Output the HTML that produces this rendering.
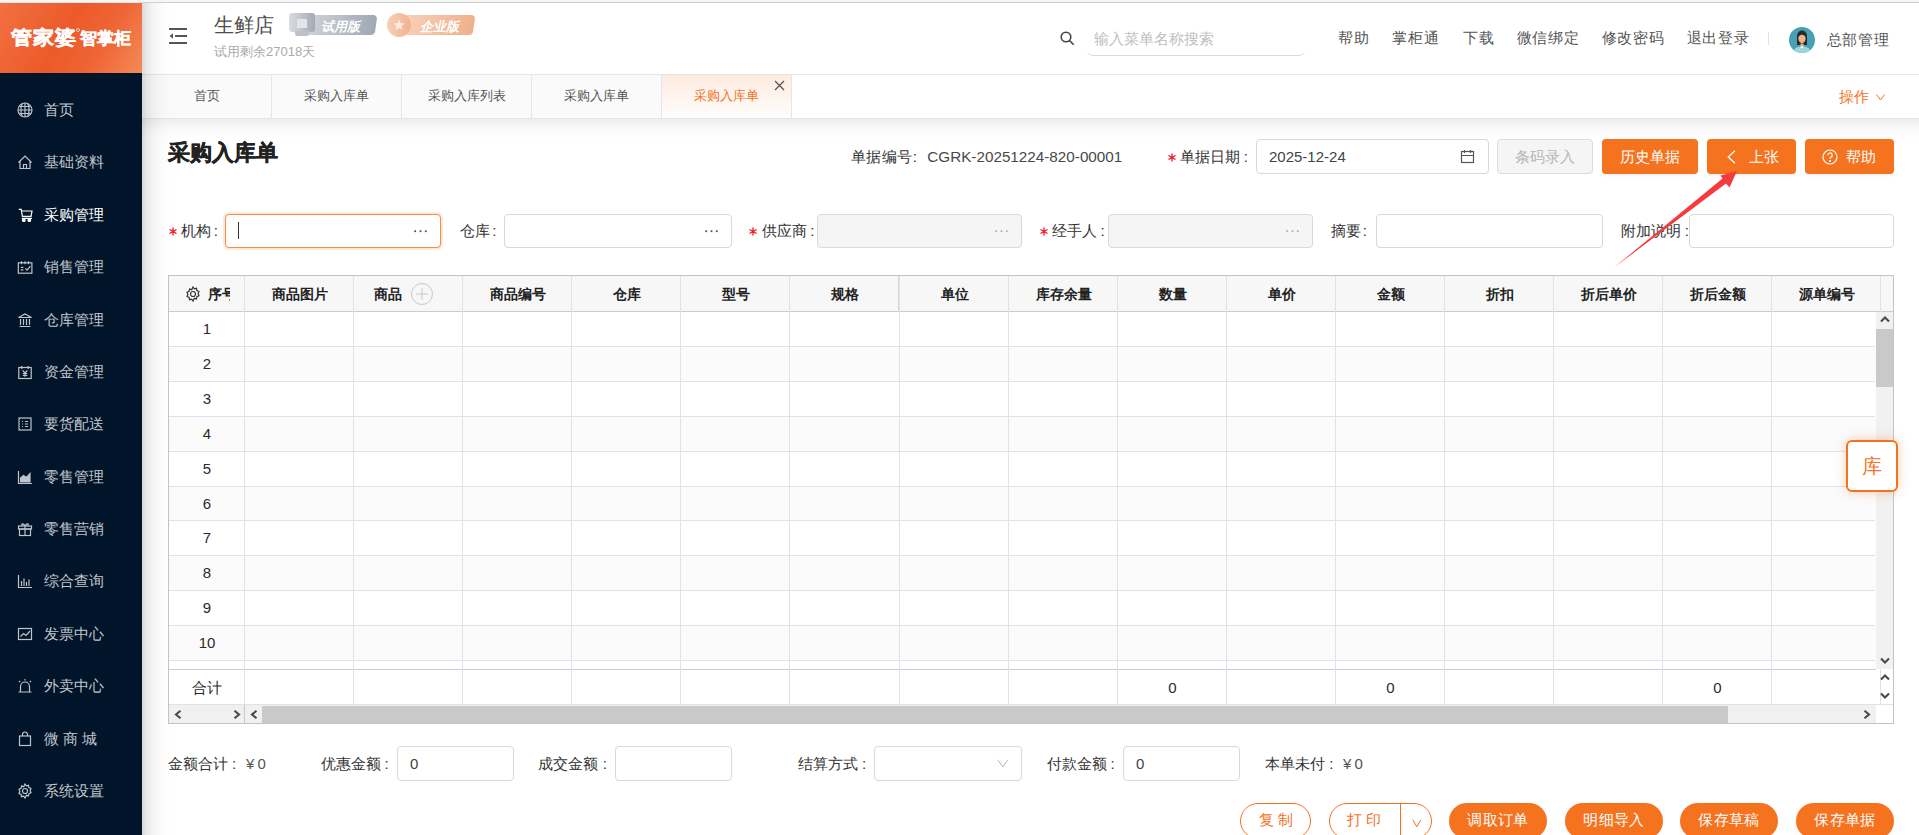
<!DOCTYPE html>
<html><head><meta charset="utf-8">
<style>
*{margin:0;padding:0;box-sizing:border-box}
html,body{width:1919px;height:835px;overflow:hidden;background:#fff;font-family:"Liberation Sans",sans-serif;color:#333}
.a{position:absolute}
.t{position:absolute;white-space:nowrap;line-height:1}
/* top strip */
#strip{left:0;top:0;width:1919px;height:2px;background:#f5f6f8}
#stripline{left:142px;top:2px;width:1777px;height:1px;background:#cfcfcf}
#stripline2{left:0;top:2px;width:142px;height:1px;background:#dfe6e9}
/* sidebar */
#side{left:0;top:3px;width:142px;height:832px;background:#001529}
#logo{left:0;top:3px;width:142px;height:70px;background:linear-gradient(120deg,#f27040 0%,#ec5a2a 45%,#ef6535 70%,#f58a58 100%)}
.mi{position:absolute;left:0;width:142px;height:20px}
.mi svg{position:absolute;left:17px;top:2px}
.mi span{position:absolute;left:44px;top:0;font-size:15px;line-height:20px;color:#c0c4cc;white-space:nowrap}
.mi.on span{color:#fff}
/* header */
#hdr{left:142px;top:3px;width:1777px;height:71px;background:#fff}
#shadowL{left:142px;top:3px;width:30px;height:832px;background:linear-gradient(90deg,rgba(0,0,0,.15) 0,rgba(0,0,0,.09) 15%,rgba(0,0,0,.045) 35%,rgba(0,0,0,.015) 65%,rgba(0,0,0,0) 100%)}
/* tabs */
#tabs{left:142px;top:74px;width:1777px;height:45px;background:#fff;border-top:1px solid #e6e6e6;border-bottom:1px solid #e6e6e6}
.tab{position:absolute;top:0;height:43px;width:130px;background:#fafafa;border-right:1px solid #e6e6e6;font-size:13px;color:#555;text-align:center;line-height:41px}
#tabshadow{left:142px;top:119px;width:1777px;height:20px;background:linear-gradient(180deg,rgba(0,0,0,.07) 0,rgba(0,0,0,.035) 30%,rgba(0,0,0,.01) 70%,rgba(0,0,0,0) 100%)}
/* form */
.lbl{position:absolute;font-size:15px;color:#333;white-space:nowrap;line-height:20px}
.req{color:#f5222d;margin-right:4px}
.req2{font-size:12px;color:#f5222d}
.inp{position:absolute;height:34px;border:1px solid #d9d9d9;border-radius:4px;background:#fff}
.inp.dis{background:#f5f5f5}
.dots{position:absolute;right:12px;top:8px;font-size:14px;color:#888;letter-spacing:1px;line-height:14px}
.btn{position:absolute;top:139px;height:35px;border-radius:4px;background:#f5721f;color:#fff;font-size:15px;text-align:center;line-height:35px;box-shadow:0 2px 2px rgba(80,100,140,.08)}
/* table */
#tbl{left:168px;top:275px;width:1726px;height:449px;border:1px solid #bfc3cc;background:#fff}
.vl{position:absolute;top:0;width:1px;background:#dfe2ea}
.hl{position:absolute;left:0;height:1px;background:#dfe2ea}
.th{position:absolute;top:0;height:36px;line-height:37px;text-align:center;font-size:14px;font-weight:bold;color:#222}
.rn{position:absolute;left:0;width:76px;text-align:center;font-size:15px;color:#2a2a2a;line-height:33px;height:35px}
/* bottom */
.pill{position:absolute;top:803px;height:36px;border-radius:18px;font-size:15px;text-align:center;line-height:34px}
.pill.o{border:1.3px solid #f5721f;color:#f5721f;background:#fff;line-height:32px}
.pill.f{background:#f5721f;color:#fff;line-height:34px;letter-spacing:0.3px}
</style></head><body>
<div class="a" id="strip"></div>
<div class="a" id="stripline"></div>
<div class="a" id="stripline2"></div>

<!-- SIDEBAR -->
<div class="a" id="side"></div>
<div class="a" id="logo"></div>
<div class="t" style="left:11px;top:25.8px;font-size:21px;font-weight:bold;color:#fff;letter-spacing:1px;transform:scaleY(0.9);transform-origin:0 100%;-webkit-text-stroke:0.5px #fff">管家婆</div>
<div class="a" style="left:76px;top:28px;width:4px;height:4px;border:1px solid rgba(255,255,255,.7);border-radius:50%"></div>
<div class="t" style="left:80px;top:30px;font-size:17px;font-weight:bold;color:#fff;-webkit-text-stroke:0.3px #fff">智掌柜</div>

<div class="mi" style="top:100.00px"><svg width="16" height="16" viewBox="0 0 16 16" fill="none" stroke="#c0c4cc" stroke-width="1.2" style="color:#c0c4cc"><circle cx="8" cy="8" r="7"/><path d="M1 8h14M8 1v14M2.5 4.5h11M2.5 11.5h11M5.2 1.8c-1.6 3.8-1.6 8.6 0 12.4M10.8 1.8c1.6 3.8 1.6 8.6 0 12.4"/></svg><span>首页</span></div>
<div class="mi" style="top:152.38px"><svg width="16" height="16" viewBox="0 0 16 16" fill="none" stroke="#c0c4cc" stroke-width="1.2" style="color:#c0c4cc"><path d="M1.5 8.5L8 2l6.5 6.5M3 7v7.5h10V7M6.5 14.5v-4h3v4"/></svg><span>基础资料</span></div>
<div class="mi on" style="top:204.77px"><svg width="16" height="16" viewBox="0 0 16 16" fill="none" stroke="#fff" stroke-width="1.2" style="color:#fff"><path d="M1.8 2.3h2.4l1.2 7h8.6l1-5.3H4.6M4.8 11.3h10.2"/><circle cx="6.8" cy="13.2" r="1.3" fill="#fff"/><circle cx="12.3" cy="13.2" r="1.3" fill="#fff"/></svg><span>采购管理</span></div>
<div class="mi" style="top:257.15px"><svg width="16" height="16" viewBox="0 0 16 16" fill="none" stroke="#c0c4cc" stroke-width="1.2" style="color:#c0c4cc"><rect x="1.3" y="3.8" width="13.6" height="10.4"/><path d="M4.5 2.3v3M8 2.3v3M11.5 2.3v3M3.8 8.3h2.6M3.8 10.8h2.6M8.3 9.3l1.8 1.9 3.3-4"/></svg><span>销售管理</span></div>
<div class="mi" style="top:309.54px"><svg width="16" height="16" viewBox="0 0 16 16" fill="none" stroke="#c0c4cc" stroke-width="1.2" style="color:#c0c4cc"><path d="M1.5 5.5L8 2l6.5 3.5zM2.5 14.5h11M3.5 7v6M6.5 7v6M9.5 7v6M12.5 7v6"/></svg><span>仓库管理</span></div>
<div class="mi" style="top:361.93px"><svg width="16" height="16" viewBox="0 0 16 16" fill="none" stroke="#c0c4cc" stroke-width="1.2" style="color:#c0c4cc"><rect x="1.8" y="3.5" width="12.4" height="11"/><path d="M4.8 2v3M11.2 2v3M5.6 6.3L8 9l2.4-2.7M5.8 9.5h4.4M5.8 11.3h4.4M8 9v3.8"/></svg><span>资金管理</span></div>
<div class="mi" style="top:414.31px"><svg width="16" height="16" viewBox="0 0 16 16" fill="none" stroke="#c0c4cc" stroke-width="1.2" style="color:#c0c4cc"><rect x="2" y="2" width="12" height="12"/><path d="M5 5.5h1M8 5.5h3M5 8h1M8 8h3M5 10.5h1M8 10.5h3"/></svg><span>要货配送</span></div>
<div class="mi" style="top:466.69px"><svg width="16" height="16" viewBox="0 0 16 16" fill="none" stroke="#c0c4cc" stroke-width="1.2" style="color:#c0c4cc"><path d="M1.5 2v12.5H15" /><path d="M3.5 13V9l3-2.5 3 2 3.5-4V13z" fill="currentColor"/></svg><span>零售管理</span></div>
<div class="mi" style="top:519.08px"><svg width="16" height="16" viewBox="0 0 16 16" fill="none" stroke="#c0c4cc" stroke-width="1.2" style="color:#c0c4cc"><rect x="1.5" y="5" width="13" height="3"/><rect x="2.5" y="8" width="11" height="6.5"/><path d="M8 5v9.5M8 5C6 1.5 3.5 3 5.5 5M8 5c2-3.5 4.5-2 2.5 0"/></svg><span>零售营销</span></div>
<div class="mi" style="top:571.46px"><svg width="16" height="16" viewBox="0 0 16 16" fill="none" stroke="#c0c4cc" stroke-width="1.2" style="color:#c0c4cc"><path d="M1.5 2v12.5H15M4.5 13V8M7 13V5.5M9.5 13V9M12 13V6.5"/></svg><span>综合查询</span></div>
<div class="mi" style="top:623.85px"><svg width="16" height="16" viewBox="0 0 16 16" fill="none" stroke="#c0c4cc" stroke-width="1.2" style="color:#c0c4cc"><rect x="1.5" y="2.5" width="13" height="11"/><path d="M3.5 10.5l3-3 2.5 2 4-4.5"/></svg><span>发票中心</span></div>
<div class="mi" style="top:676.24px"><svg width="16" height="16" viewBox="0 0 16 16" fill="none" stroke="#c0c4cc" stroke-width="1.2" style="color:#c0c4cc"><path d="M3.5 13.5V8.5a4.5 4.5 0 0 1 9 0v5M1.5 14h13M8 1v1.5M2 3l1.2 1.2M14 3l-1.2 1.2"/></svg><span>外卖中心</span></div>
<div class="mi" style="top:728.62px"><svg width="16" height="16" viewBox="0 0 16 16" fill="none" stroke="#c0c4cc" stroke-width="1.2" style="color:#c0c4cc"><rect x="2.5" y="5" width="11" height="9.5"/><path d="M5.5 5V3.5a2.5 2.5 0 0 1 5 0V5"/></svg><span>微 商 城</span></div>
<div class="mi" style="top:781.00px"><svg width="16" height="16" viewBox="0 0 16 16" fill="none" stroke="#c0c4cc" stroke-width="1.2" style="color:#c0c4cc"><circle cx="8" cy="8" r="2.5"/><path d="M8 1l1.3 1.9 2.2-.6.4 2.2 2.1 1-.9 2.1.9 2.1-2.1 1-.4 2.2-2.2-.6L8 15l-1.3-1.9-2.2.6-.4-2.2-2.1-1 .9-2.1-.9-2.1 2.1-1 .4-2.2 2.2.6z"/></svg><span>系统设置</span></div>

<!-- HEADER -->
<div class="a" id="hdr"></div>

<!-- header content -->
<svg class="a" style="left:169px;top:28px" width="18" height="16" viewBox="0 0 18 16"><rect x="0" y="0" width="18" height="2" fill="#555"/><rect x="6" y="7" width="12" height="2" fill="#555"/><rect x="0" y="14" width="18" height="2" fill="#555"/><path d="M0.5 8L4 5.2v5.6z" fill="#555"/></svg>
<div class="t" style="left:214px;top:14.5px;font-size:20px;color:#4d4d4d">生鲜店</div>
<div class="t" style="left:214px;top:45px;font-size:13px;color:#aaa">试用剩余27018天</div>
<!-- badge trial -->
<div class="a" style="left:300px;top:15px;width:76px;height:20px;border-radius:4px;background:linear-gradient(90deg,#d3d7dd,#a0a8b5);transform:skewX(-8deg)"></div>
<div class="a" style="left:289px;top:13px;width:26px;height:19px;border-radius:3px;background:linear-gradient(90deg,#d9dce1,#a2aab6)"></div>
<div class="a" style="left:295px;top:31px;width:14px;height:5px;background:#bcc2ca;border-radius:0 0 2px 2px"></div>
<div class="a" style="left:297px;top:19px;width:10px;height:9px;background:#e3e5e9"></div>
<div class="t" style="left:321px;top:19.5px;font-size:13px;font-weight:900;font-style:italic;color:#fff">试用版</div>
<!-- badge enterprise -->
<div class="a" style="left:400px;top:15px;width:74px;height:20px;border-radius:4px;background:linear-gradient(90deg,#f8d2bc,#f0b08c);transform:skewX(-8deg)"></div>
<div class="a" style="left:387px;top:13px;width:24px;height:24px;border-radius:12px;background:linear-gradient(90deg,#f8d0b8,#f1b28f)"></div>
<svg class="a" style="left:393px;top:19px" width="12" height="12" viewBox="0 0 12 12"><path d="M6 0.5l1.6 3.6 3.9.4-2.9 2.6.8 3.9L6 9 2.6 11l.8-3.9L.5 4.5l3.9-.4z" fill="#fcebe2"/></svg>
<div class="t" style="left:420px;top:19.5px;font-size:13px;font-weight:900;font-style:italic;color:#fff">企业版</div>
<!-- search -->
<svg class="a" style="left:1060px;top:31px" width="15" height="15" viewBox="0 0 15 15" fill="none" stroke="#444" stroke-width="1.6"><circle cx="6" cy="6" r="4.8"/><path d="M9.5 9.5l4.2 4.2"/></svg>
<div class="a" style="left:1087px;top:40px;width:218px;height:16px;border-bottom:1px solid #dcdcdc;border-radius:0 0 6px 6px"></div>
<div class="t" style="left:1094px;top:31px;font-size:15px;color:#c0c0c0">输入菜单名称搜索</div>
<div class="t" style="left:1338px;top:30px;font-size:15px;color:#555;letter-spacing:1px">帮助</div>
<div class="t" style="left:1392px;top:30px;font-size:15px;color:#555;letter-spacing:0.9px">掌柜通</div>
<div class="t" style="left:1462.5px;top:30px;font-size:15px;color:#555;letter-spacing:1px">下载</div>
<div class="t" style="left:1516.5px;top:30px;font-size:15px;color:#555;letter-spacing:0.9px">微信绑定</div>
<div class="t" style="left:1601.5px;top:30px;font-size:15px;color:#555;letter-spacing:0.7px">修改密码</div>
<div class="t" style="left:1686.5px;top:30px;font-size:15px;color:#555;letter-spacing:0.7px">退出登录</div>
<div class="a" style="left:1768px;top:32px;width:1px;height:13px;background:#e3e3e3"></div>
<svg class="a" style="left:1789px;top:27px" width="26" height="26" viewBox="0 0 26 26"><defs><clipPath id="cc"><circle cx="13" cy="13" r="13"/></clipPath></defs><circle cx="13" cy="13" r="13" fill="#46a1b4"/><g clip-path="url(#cc)"><path d="M4 27c0-5 3-7.5 9-7.5s9 2.5 9 7.5z" fill="#9fd3df"/><path d="M8 18V9.5C8 6 10 3.5 13 3.5S18 6 18 9.5V18z" fill="#2b2b2b"/><ellipse cx="13" cy="11.5" rx="3.6" ry="4.6" fill="#f0b48a"/><path d="M9.3 9.5c.5-3 2-4 3.7-4s3.2 1 3.7 4c-1.5-1.2-3-1.8-4.5-1.8z" fill="#2b2b2b"/><path d="M11.5 16.5h3v3h-3z" fill="#f0b48a"/><path d="M11 19.5l2 2 2-2z" fill="#fff"/></g></svg>
<div class="t" style="left:1826.5px;top:32px;font-size:15px;color:#555;letter-spacing:0.7px">总部管理</div>

<!-- TABS -->
<div class="a" id="tabs">
 <div class="tab" style="left:0">首页</div>
 <div class="tab" style="left:130px">采购入库单</div>
 <div class="tab" style="left:260px">采购入库列表</div>
 <div class="tab" style="left:390px">采购入库单</div>
 <div class="tab" style="left:520px;color:#f5721f;background:linear-gradient(180deg,#fdebe0,#fffdfb)">采购入库单</div>
</div>
<div class="a" id="tabshadow"></div>
<div class="a" id="shadowL"></div>
<svg class="a" style="left:774px;top:80px" width="11" height="11" viewBox="0 0 11 11" stroke="#555" stroke-width="1.3"><path d="M1 1l9 9M10 1l-9 9"/></svg>
<div class="t" style="left:1839px;top:88.5px;font-size:15px;color:#f5721f">操作</div>
<svg class="a" style="left:1876px;top:94px" width="9" height="7" viewBox="0 0 9 7" fill="none" stroke="#f5721f" stroke-width="1"><path d="M0.5 0.5L4.5 6l4-5.5"/></svg>


<!-- PAGE -->
<div class="t" style="left:168px;top:141.5px;font-size:22px;font-weight:bold;color:#222;-webkit-text-stroke:0.4px #222">采购入库单</div>
<div class="t" style="left:850.5px;top:149px;font-size:15px;color:#333;letter-spacing:0.5px">单据编号</div><div class="t" style="left:912.7px;top:149px;font-size:15px;color:#333">:</div><div class="t" style="left:927.3px;top:149px;font-size:15.25px;color:#4a4a4a">CGRK-20251224-820-00001</div>
<svg class="a" style="left:1167.5px;top:153.0px" width="8" height="9" viewBox="0 0 8 9" stroke="#f5141e" stroke-width="1.3" fill="none"><path d="M4 0.5v8M0.5 2.5l7 4M0.5 6.5l7-4"/></svg><div class="t" style="left:1180px;top:149px;font-size:15px;color:#333">单据日期</div><div class="t" style="left:1243.7px;top:149px;font-size:15px;color:#333">:</div>
<div class="inp" style="left:1256px;top:139px;width:233px;height:35px"></div>
<div class="t" style="left:1269px;top:149px;font-size:15px;color:#444">2025-12-24</div>
<svg class="a" style="left:1460px;top:149px" width="15" height="15" viewBox="0 0 15 15" fill="none" stroke="#555" stroke-width="1.2"><rect x="1.5" y="2.5" width="12" height="11"/><path d="M1.5 6.5h12M4.5 1v3M10.5 1v3"/></svg>
<div class="btn" style="left:1497px;width:96px;background:#f5f5f5;border:1px solid #dcdcdc;color:#b5b5b5;line-height:33px;box-shadow:none">条码录入</div>
<div class="btn" style="left:1602px;width:96px">历史单据</div>
<div class="btn" style="left:1707px;width:89px"><svg style="position:absolute;left:20px;top:11px" width="9" height="14" viewBox="0 0 9 14" fill="none" stroke="#fff" stroke-width="1.3"><path d="M8 0.8L1.2 7 8 13.2"/></svg><span style="position:absolute;left:41.5px">上张</span></div>
<div class="btn" style="left:1805px;width:89px"><svg style="position:absolute;left:17px;top:9.5px" width="16" height="16" viewBox="0 0 16 16" fill="none" stroke="#fff" stroke-width="1.2"><circle cx="8" cy="8" r="7"/><path d="M5.8 6.2a2.2 2.2 0 1 1 3 2c-.6.3-.8.7-.8 1.3v.6"/><circle cx="8" cy="12" r=".5" fill="#fff"/></svg><span style="position:absolute;left:41px">帮助</span></div>

<!-- row 2 -->
<svg class="a" style="left:168.5px;top:227.0px" width="8" height="9" viewBox="0 0 8 9" stroke="#f5141e" stroke-width="1.3" fill="none"><path d="M4 0.5v8M0.5 2.5l7 4M0.5 6.5l7-4"/></svg><div class="t" style="left:181px;top:223px;font-size:15px;color:#333">机构</div><div class="t" style="left:213.8px;top:223px;font-size:15px;color:#333">:</div>
<div class="inp" style="left:225px;top:214px;width:216px;height:34px;border-color:#f78d45;box-shadow:0 0 0 2px rgba(247,141,69,.2)"></div>
<div class="a" style="left:238px;top:222px;width:1px;height:17px;background:#333"></div>
<svg class="a" style="left:414px;top:229.5px" width="13" height="3" viewBox="0 0 13 3" fill="#555"><rect x="0.3" y="0.3" width="1.8" height="1.8"/><rect x="5.6" y="0.3" width="1.8" height="1.8"/><rect x="10.9" y="0.3" width="1.8" height="1.8"/></svg>
<div class="t" style="left:459.5px;top:223px;font-size:15px;color:#333">仓库</div><div class="t" style="left:492.3px;top:223px;font-size:15px;color:#333">:</div>
<div class="inp" style="left:504px;top:214px;width:228px;height:34px"></div>
<svg class="a" style="left:705px;top:229.5px" width="13" height="3" viewBox="0 0 13 3" fill="#555"><rect x="0.3" y="0.3" width="1.8" height="1.8"/><rect x="5.6" y="0.3" width="1.8" height="1.8"/><rect x="10.9" y="0.3" width="1.8" height="1.8"/></svg>
<svg class="a" style="left:749.0px;top:227.0px" width="8" height="9" viewBox="0 0 8 9" stroke="#f5141e" stroke-width="1.3" fill="none"><path d="M4 0.5v8M0.5 2.5l7 4M0.5 6.5l7-4"/></svg><div class="t" style="left:761.5px;top:223px;font-size:15px;color:#333">供应商</div><div class="t" style="left:810.2px;top:223px;font-size:15px;color:#333">:</div>
<div class="inp dis" style="left:817px;top:214px;width:205px;height:34px"></div>
<svg class="a" style="left:995px;top:229.5px" width="13" height="3" viewBox="0 0 13 3" fill="#b0b0b0"><rect x="0.3" y="0.3" width="1.8" height="1.8"/><rect x="5.6" y="0.3" width="1.8" height="1.8"/><rect x="10.9" y="0.3" width="1.8" height="1.8"/></svg>
<svg class="a" style="left:1040.0px;top:227.0px" width="8" height="9" viewBox="0 0 8 9" stroke="#f5141e" stroke-width="1.3" fill="none"><path d="M4 0.5v8M0.5 2.5l7 4M0.5 6.5l7-4"/></svg><div class="t" style="left:1051.5px;top:223px;font-size:15px;color:#333">经手人</div><div class="t" style="left:1100.6px;top:223px;font-size:15px;color:#333">:</div>
<div class="inp dis" style="left:1108px;top:214px;width:205px;height:34px"></div>
<svg class="a" style="left:1286px;top:229.5px" width="13" height="3" viewBox="0 0 13 3" fill="#b0b0b0"><rect x="0.3" y="0.3" width="1.8" height="1.8"/><rect x="5.6" y="0.3" width="1.8" height="1.8"/><rect x="10.9" y="0.3" width="1.8" height="1.8"/></svg>
<div class="t" style="left:1330.5px;top:223px;font-size:15px;color:#333">摘要</div><div class="t" style="left:1362.7px;top:223px;font-size:15px;color:#333">:</div>
<div class="inp" style="left:1376px;top:214px;width:227px;height:34px"></div>
<div class="t" style="left:1621px;top:223px;font-size:15px;color:#333">附加说明</div><div class="t" style="left:1684.7px;top:223px;font-size:15px;color:#333">:</div>
<div class="inp" style="left:1689px;top:214px;width:205px;height:34px"></div>

<!-- TABLE -->
<div class="a" id="tbl">
<div class="a" style="left:0;top:0;width:1724px;height:36px;background:#f7f7f8;border-bottom:1px solid #c9ccd3"></div><div class="a" style="left:729px;top:0;width:2px;height:35px;background:#d4d7df"></div>
<div class="a" style="left:0;top:393px;width:1707px;height:1px;background:#c9ccd3"></div>
<div class="hl" style="top:70px;width:1706px"></div>
<div class="a" style="left:0;top:71px;width:1707px;height:34px;background:#fbfbfc"></div>
<div class="hl" style="top:105px;width:1706px"></div>
<div class="hl" style="top:140px;width:1706px"></div>
<div class="a" style="left:0;top:141px;width:1707px;height:34px;background:#fbfbfc"></div>
<div class="hl" style="top:175px;width:1706px"></div>
<div class="hl" style="top:210px;width:1706px"></div>
<div class="a" style="left:0;top:211px;width:1707px;height:33px;background:#fbfbfc"></div>
<div class="hl" style="top:244px;width:1706px"></div>
<div class="hl" style="top:279px;width:1706px"></div>
<div class="a" style="left:0;top:280px;width:1707px;height:34px;background:#fbfbfc"></div>
<div class="hl" style="top:314px;width:1706px"></div>
<div class="hl" style="top:349px;width:1706px"></div>
<div class="a" style="left:0;top:350px;width:1707px;height:34px;background:#fbfbfc"></div>
<div class="hl" style="top:384px;width:1706px"></div>
<div class="vl" style="left:75px;height:428px"></div>
<div class="vl" style="left:184px;height:428px"></div>
<div class="vl" style="left:293px;height:428px"></div>
<div class="vl" style="left:402px;height:428px"></div>
<div class="vl" style="left:511px;height:428px"></div>
<div class="vl" style="left:620px;height:428px"></div>
<div class="vl" style="left:730px;height:428px"></div>
<div class="vl" style="left:839px;height:428px"></div>
<div class="vl" style="left:948px;height:428px"></div>
<div class="vl" style="left:1057px;height:428px"></div>
<div class="vl" style="left:1166px;height:428px"></div>
<div class="vl" style="left:1275px;height:428px"></div>
<div class="vl" style="left:1384px;height:428px"></div>
<div class="vl" style="left:1493px;height:428px"></div>
<div class="vl" style="left:1602px;height:428px"></div>
<div class="vl" style="left:1711px;height:428px"></div>
<div class="th" style="left:0px;width:76px"><svg style="position:absolute;left:16px;top:9.5px" width="16" height="16" viewBox="0 0 16 16" fill="none" stroke="#333" stroke-width="1.2"><circle cx="8" cy="8" r="2.5"/><path d="M8 1l1.3 1.9 2.2-.6.4 2.2 2.1 1-.9 2.1.9 2.1-2.1 1-.4 2.2-2.2-.6L8 15l-1.3-1.9-2.2.6-.4-2.2-2.1-1 .9-2.1-.9-2.1 2.1-1 .4-2.2 2.2.6z"/></svg><span style="position:absolute;left:39px;top:0;width:22px;height:36px;overflow:hidden;white-space:nowrap">序号</span></div>
<div class="th" style="left:76px;width:109px">商品图片</div>
<div class="th" style="left:185px;width:109px"><span style="position:absolute;left:20px">商品</span><svg style="position:absolute;left:57px;top:7px" width="22" height="22" viewBox="0 0 22 22" fill="none" stroke="#c8c8c8" stroke-width="1"><circle cx="11" cy="11" r="10.5"/><path d="M11 5v12M5 11h12"/></svg></div>
<div class="th" style="left:294px;width:109px">商品编号</div>
<div class="th" style="left:403px;width:109px">仓库</div>
<div class="th" style="left:512px;width:109px">型号</div>
<div class="th" style="left:621px;width:110px">规格</div>
<div class="th" style="left:731px;width:109px">单位</div>
<div class="th" style="left:840px;width:109px">库存余量</div>
<div class="th" style="left:949px;width:109px">数量</div>
<div class="th" style="left:1058px;width:109px">单价</div>
<div class="th" style="left:1167px;width:109px">金额</div>
<div class="th" style="left:1276px;width:109px">折扣</div>
<div class="th" style="left:1385px;width:109px">折后单价</div>
<div class="th" style="left:1494px;width:109px">折后金额</div>
<div class="th" style="left:1603px;width:109px">源单编号</div>
<div class="rn" style="top:36px;height:34px">1</div>
<div class="rn" style="top:71px;height:34px">2</div>
<div class="rn" style="top:106px;height:34px">3</div>
<div class="rn" style="top:141px;height:34px">4</div>
<div class="rn" style="top:176px;height:34px">5</div>
<div class="rn" style="top:211px;height:33px">6</div>
<div class="rn" style="top:245px;height:34px">7</div>
<div class="rn" style="top:280px;height:34px">8</div>
<div class="rn" style="top:315px;height:34px">9</div>
<div class="rn" style="top:350px;height:34px">10</div>
<div class="rn" style="line-height:35px;top:394px">合计</div>
<div class="rn" style="line-height:35px;top:394px;left:949px;width:109px">0</div>
<div class="rn" style="line-height:35px;top:394px;left:1167px;width:109px">0</div>
<div class="rn" style="line-height:35px;top:394px;left:1494px;width:109px">0</div>
<div class="a" style="left:1707px;top:36px;width:17px;height:357px;background:#f1f1f1"></div>
<div class="a" style="left:1707px;top:53px;width:17px;height:58px;background:#c9c9c9"></div>
<svg class="a" style="left:1711px;top:40px" width="10" height="7" viewBox="0 0 10 7" fill="none" stroke="#4a4a4a" stroke-width="2.1"><path d="M1 5.5l4-4 4 4"/></svg>
<svg class="a" style="left:1711px;top:381px" width="10" height="7" viewBox="0 0 10 7" fill="none" stroke="#4a4a4a" stroke-width="2.1"><path d="M1 1.5l4 4 4-4"/></svg>
<svg class="a" style="left:1711px;top:398px" width="10" height="7" viewBox="0 0 10 7" fill="none" stroke="#4a4a4a" stroke-width="2.1"><path d="M1 5.5l4-4 4 4"/></svg>
<svg class="a" style="left:1711px;top:416px" width="10" height="7" viewBox="0 0 10 7" fill="none" stroke="#4a4a4a" stroke-width="2.1"><path d="M1 1.5l4 4 4-4"/></svg>
<div class="a" style="left:0;top:428px;width:1724px;height:1px;background:#dfe2ea"></div>
<div class="a" style="left:0;top:429px;width:75px;height:18px;background:#f0f0f0"></div>
<div class="a" style="left:76px;top:429px;width:1631px;height:18px;background:#f0f0f0"></div>
<div class="a" style="left:75px;top:429px;width:1px;height:18px;background:#c3c7d0"></div>
<div class="a" style="left:93px;top:430px;width:1466px;height:17px;background:#c9c9c9"></div>
<svg class="a" style="left:4.5px;top:434px" width="8" height="9" viewBox="0 0 8 9" fill="none" stroke="#4a4a4a" stroke-width="2.1" stroke-linejoin="miter"><path d="M6.5 0.8L2 4.5l4.5 3.7"/></svg>
<svg class="a" style="left:63.5px;top:434px" width="8" height="9" viewBox="0 0 8 9" fill="none" stroke="#4a4a4a" stroke-width="2.1" stroke-linejoin="miter"><path d="M1.5 0.8L6 4.5 1.5 8.2"/></svg>
<svg class="a" style="left:80.5px;top:434px" width="8" height="9" viewBox="0 0 8 9" fill="none" stroke="#4a4a4a" stroke-width="2.1" stroke-linejoin="miter"><path d="M6.5 0.8L2 4.5l4.5 3.7"/></svg>
<svg class="a" style="left:1693.5px;top:434px" width="8" height="9" viewBox="0 0 8 9" fill="none" stroke="#4a4a4a" stroke-width="2.1" stroke-linejoin="miter"><path d="M1.5 0.8L6 4.5 1.5 8.2"/></svg>
</div>
<!-- BOTTOM -->
<div class="t" style="left:168px;top:756px;font-size:15px;color:#333">金额合计</div><div class="t" style="left:232.1px;top:756px;font-size:15px;color:#333">:</div><div class="t" style="left:246px;top:756px;font-size:15px;color:#555">¥</div><div class="t" style="left:257.6px;top:756px;font-size:15px;color:#555">0</div>
<div class="t" style="left:321px;top:756px;font-size:15px;color:#333">优惠金额</div><div class="t" style="left:384.5px;top:756px;font-size:15px;color:#333">:</div>
<div class="inp" style="left:397px;top:746px;width:117px;height:35px"></div>
<div class="t" style="left:410px;top:756px;font-size:15px;color:#444">0</div>
<div class="t" style="left:538.4px;top:756px;font-size:15px;color:#333">成交金额</div><div class="t" style="left:602.7px;top:756px;font-size:15px;color:#333">:</div>
<div class="inp" style="left:615px;top:746px;width:117px;height:35px"></div>
<div class="t" style="left:797.5px;top:756px;font-size:15px;color:#333">结算方式</div><div class="t" style="left:861.9000000000001px;top:756px;font-size:15px;color:#333">:</div>
<div class="inp" style="left:874px;top:746px;width:148px;height:35px"></div>
<svg class="a" style="left:996.5px;top:758.5px" width="12" height="9" viewBox="0 0 12 9" fill="none" stroke="#b5b5b5" stroke-width="1"><path d="M0.8 0.8L5.8 8l5-7.2"/></svg>
<div class="t" style="left:1047px;top:756px;font-size:15px;color:#333">付款金额</div><div class="t" style="left:1110.5px;top:756px;font-size:15px;color:#333">:</div>
<div class="inp" style="left:1123px;top:746px;width:117px;height:35px"></div>
<div class="t" style="left:1136px;top:756px;font-size:15px;color:#444">0</div>
<div class="t" style="left:1265px;top:756px;font-size:15px;color:#333">本单未付</div><div class="t" style="left:1329.3px;top:756px;font-size:15px;color:#333">:</div><div class="t" style="left:1343px;top:756px;font-size:15px;color:#555">¥</div><div class="t" style="left:1354.6px;top:756px;font-size:15px;color:#555">0</div>

<div class="pill o" style="left:1240px;width:71px;letter-spacing:4px;padding-left:4px">复制</div>
<div class="pill o" style="left:1329px;width:103px"><span style="position:absolute;left:17px;letter-spacing:4px">打印</span><div style="position:absolute;left:70px;top:0;width:1px;height:36px;background:#f5721f"></div><svg style="position:absolute;left:81.5px;top:14.5px" width="10" height="9" viewBox="0 0 10 9" fill="none" stroke="#f5721f" stroke-width="1"><path d="M0.8 0.8L4.8 7.8 8.8 0.8"/></svg></div>
<div class="pill f" style="left:1449px;width:98px">调取订单</div>
<div class="pill f" style="left:1565px;width:98px">明细导入</div>
<div class="pill f" style="left:1680px;width:98px">保存草稿</div>
<div class="pill f" style="left:1796px;width:98px">保存单据</div>

<!-- floating -->
<div class="a" style="left:1846px;top:440px;width:52px;height:52px;border:2px solid #f5721f;border-radius:6px;background:#fff;box-shadow:0 0 12px rgba(243,112,30,.35);color:#f5721f;font-size:20px;line-height:48px;text-align:center">库</div>

<!-- arrow -->
<svg class="a" style="left:0;top:0" width="1919" height="835" viewBox="0 0 1919 835"><path d="M1614 267.5L1722.5 178.5L1720.5 175.5L1737 171L1729.5 187.5L1726 183.5Z" fill="#f53b3b"/></svg>

</body></html>
